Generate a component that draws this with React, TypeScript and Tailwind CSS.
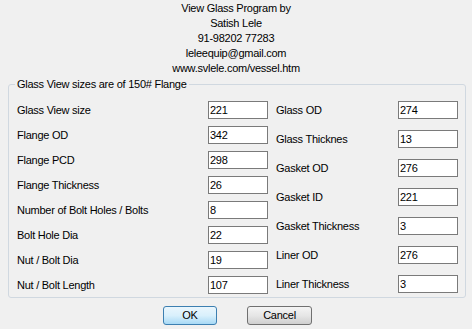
import React from "react";

const leftRows: [string, string][] = [
  ["Glass View size", "221"],
  ["Flange OD", "342"],
  ["Flange PCD", "298"],
  ["Flange Thickness", "26"],
  ["Number of Bolt Holes / Bolts", "8"],
  ["Bolt Hole Dia", "22"],
  ["Nut / Bolt Dia", "19"],
  ["Nut / Bolt Length", "107"],
];

const rightRows: [string, string][] = [
  ["Glass OD", "274"],
  ["Glass Thicknes", "13"],
  ["Gasket OD", "276"],
  ["Gasket ID", "221"],
  ["Gasket Thickness", "3"],
  ["Liner OD", "276"],
  ["Liner Thickness", "3"],
];

const Field = ({ label, value, labelWidth }: { label: string; value: string; labelWidth: string }) => (
  <div className="flex h-[18px] items-center">
    <span className={`${labelWidth} shrink-0 whitespace-nowrap pt-[1px]`}>{label}</span>
    <input
      readOnly
      value={value}
      className="h-[18px] w-[60px] border border-[#7a7a7a] bg-white pl-[1px] text-[11px] text-black outline-none"
    />
  </div>
);

export default function App() {
  return (
    <div className="h-[329px] w-[472px] overflow-hidden bg-[#f0f0f0] font-['Liberation_Sans',Arial,sans-serif] text-[11px] tracking-[-0.25px] text-black">
      <div className="flex flex-col items-center pt-[1px] leading-[15px]">
        <div>View Glass Program by</div>
        <div>Satish Lele</div>
        <div>91-98202 77283</div>
        <div>leleequip@gmail.com</div>
        <div>www.svlele.com/vessel.htm</div>
      </div>

      <fieldset className="ml-[8px] mt-[1px] w-[458px] rounded-[3px] border border-[#d0d8e0] pb-[3px] pl-[8px] pr-[7px] pt-[9px]">
        <legend className="ml-[-2px] px-[2px] leading-[15px]">Glass View sizes are of 150# Flange</legend>
        <div className="flex">
          <div className="flex w-[251px] flex-col gap-[7px]">
            {leftRows.map(([label, value]) => (
              <Field key={label} label={label} value={value} labelWidth="w-[191px]" />
            ))}
          </div>
          <div className="ml-[8px] flex w-[182px] flex-col gap-[11px]">
            {rightRows.map(([label, value]) => (
              <Field key={label} label={label} value={value} labelWidth="w-[122px]" />
            ))}
          </div>
        </div>
      </fieldset>

      <div className="mt-[8px] flex justify-center gap-[30px] pl-[3px]">
        <button className="h-[19px] w-[54px] rounded-[3px] border border-[#3c7fb1] bg-linear-to-b from-[#eaf6fd] via-[#d9f0fc] to-[#a7d9f5] leading-[17px]">
          OK
        </button>
        <button className="h-[19px] w-[65px] rounded-[3px] border border-[#707070] bg-linear-to-b from-[#f4f4f4] via-[#e6e6e6] to-[#cfcfcf] leading-[17px]">
          Cancel
        </button>
      </div>
    </div>
  );
}
